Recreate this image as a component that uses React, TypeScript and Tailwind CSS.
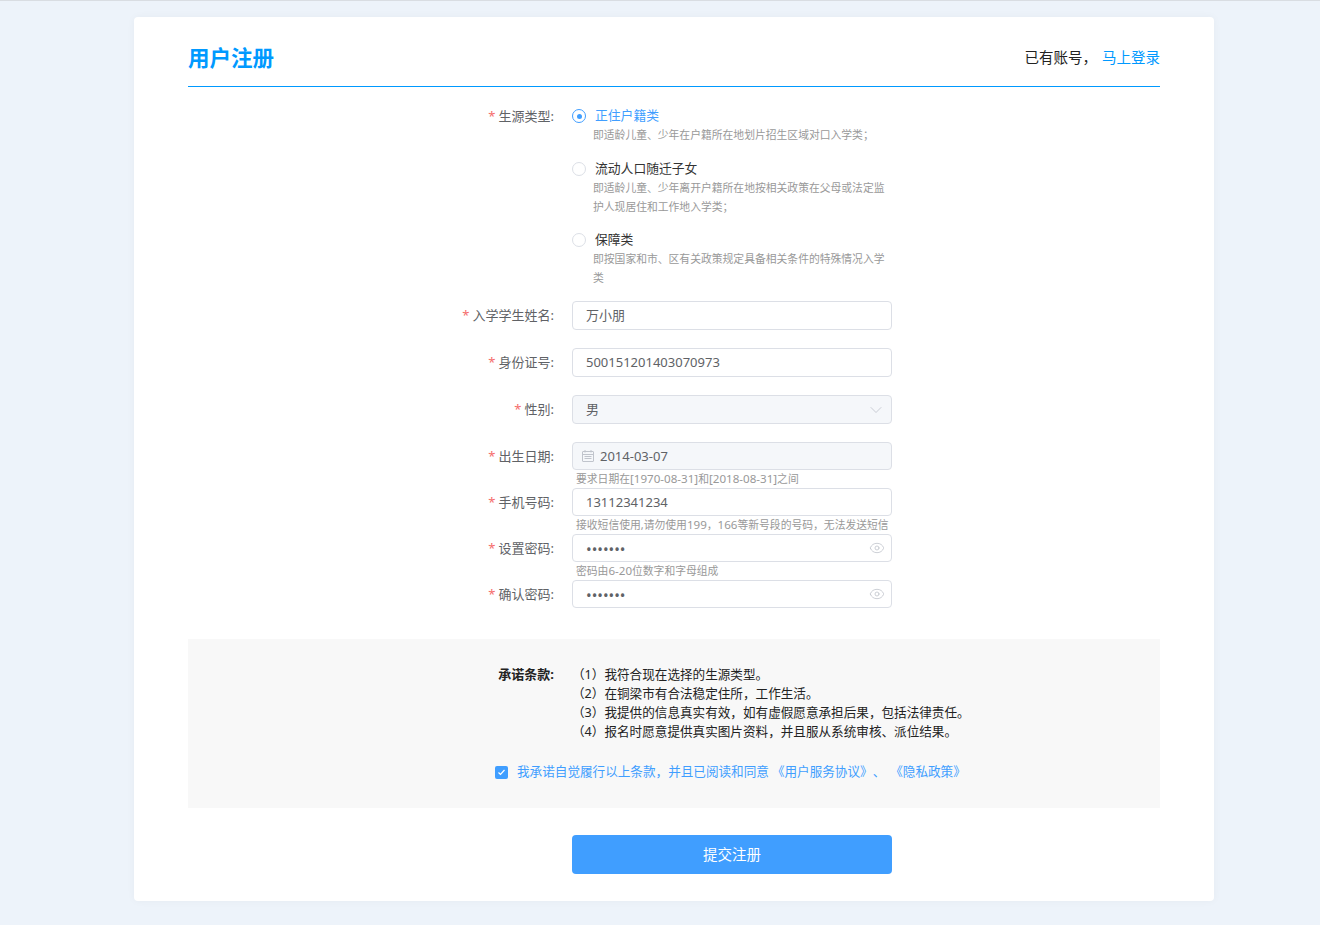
import React from 'react';
import { ChevronDown, Eye } from 'lucide-react';

const FONT = "font-['Noto_Sans','Noto_Sans_CJK_SC',sans-serif]";

const CalendarIcon = () => (
  <svg width="12" height="12" viewBox="0 0 12 12" fill="none" stroke="#c0c4cc" strokeWidth="1">
    <rect x="0.5" y="1.5" width="11" height="10" rx="0.5" />
    <path d="M0.5 4.5h11M3 0v2.5M9 0v2.5M2.5 6.5h7M2.5 8.5h7" />
  </svg>
);

const Radio = ({ checked, title, desc }: { checked?: boolean; title: string; desc: string }) => (
  <div>
    <div className="flex items-center h-[18px]">
      {checked ? (
        <span className="w-[14px] h-[14px] rounded-full border border-[#409eff] bg-white flex items-center justify-center">
          <span className="w-[5px] h-[5px] rounded-full bg-[#409eff]" />
        </span>
      ) : (
        <span className="w-[14px] h-[14px] rounded-full border border-[#dcdfe6] bg-white" />
      )}
      <span className={`ml-[9px] text-[12.8px] ${checked ? 'text-[#409eff]' : 'text-[#333]'}`}>{title}</span>
    </div>
    <p className="pl-[21px] text-[10.8px] leading-[19px] text-[#999]">{desc}</p>
  </div>
);

const Label = ({ text }: { text: string }) => (
  <label className="w-[384px] shrink-0 pr-[18px] text-right text-[13px] text-[#606266]">
    <span className="text-[#f56c6c] mr-[3px]">*</span>
    {text}:
  </label>
);

// latin part of a hint runs a little wider than the chinese around it
const Num = ({ children }: { children: React.ReactNode }) => <span className="text-[11.6px]">{children}</span>;

type FieldProps = {
  label: string;
  value: string;
  hint?: React.ReactNode;
  short?: boolean;
  type?: string;
  disabled?: boolean;
  left?: React.ReactNode;
  right?: React.ReactNode;
};

const Field = ({ label, value, hint, short, type = 'text', disabled, left, right }: FieldProps) => {
  const height = short ? 'h-[28px]' : 'h-[29px]';
  return (
    <div className="flex">
      <div className={`flex items-center ${height} ${short ? 'pt-[2px]' : ''}`}>
        <Label text={label} />
      </div>
      <div className="w-[320px]">
        <div
          className={`${height} flex items-center rounded border border-[#dcdfe6] ${disabled ? 'bg-[#f5f7fa]' : 'bg-white'} ${left ? 'pl-[9px]' : 'pl-[13px]'} pr-[8px]`}
        >
          {left}
          <input
            readOnly
            type={type}
            value={value}
            className={`flex-1 min-w-0 bg-transparent outline-none text-[#606266] ${type === 'password' ? 'text-[15px]' : 'text-[13px]'} ${short ? 'mt-[2px]' : ''} ${left ? 'ml-[6px]' : ''}`}
          />
          {right}
        </div>
        <div className="h-[18px] pl-1 text-[10.8px] leading-[18px] text-[#999] whitespace-nowrap">{hint}</div>
      </div>
    </div>
  );
};

const terms = [
  '我符合现在选择的生源类型。',
  '在铜梁市有合法稳定住所，工作生活。',
  '我提供的信息真实有效，如有虚假愿意承担后果，包括法律责任。',
  '报名时愿意提供真实图片资料，并且服从系统审核、派位结果。',
];

const App: React.FC = () => {
  return (
    <div className={`min-h-[925px] bg-[#edf3fa] border-t border-[#d9dde2] pt-4 ${FONT}`}>
      <div className="w-[1080px] ml-[134px] bg-white rounded shadow-[0_0_8px_rgba(0,0,0,0.04)] px-[54px] pb-[27px]">
        {/* Header */}
        <div className="h-[70px] flex items-center justify-between border-b border-[#0099ff] pt-[26px] pb-[13px]">
          <h1 className="text-[21.5px] font-bold text-[#0099ff]">用户注册</h1>
          <p className="text-[14.5px] text-[#222]">
            已有账号，<a href="#" className="ml-[5px] text-[#0099ff]">马上登录</a>
          </p>
        </div>

        {/* Source type */}
        <div className="flex mt-5">
          <div className="flex items-center h-[18px] pt-[2px]">
            <Label text="生源类型" />
          </div>
          <div className="w-[320px] flex flex-col gap-[15.5px]">
            <Radio checked title="正住户籍类" desc="即适龄儿童、少年在户籍所在地划片招生区域对口入学类；" />
            <Radio title="流动人口随迁子女" desc="即适龄儿童、少年离开户籍所在地按相关政策在父母或法定监护人现居住和工作地入学类；" />
            <Radio title="保障类" desc="即按国家和市、区有关政策规定具备相关条件的特殊情况入学类" />
          </div>
        </div>

        {/* Fields */}
        <div className="mt-[14px]">
          <Field label="入学学生姓名" value="万小朋" />
          <Field label="身份证号" value="500151201403070973" />
          <Field
            label="性别"
            value="男"
            disabled
            right={<ChevronDown size={20} strokeWidth={1} className="text-[#c0c4cc] -mr-[3px]" />}
          />
          <Field
            label="出生日期"
            value="2014-03-07"
            short
            disabled
            left={<CalendarIcon />}
            hint={<>要求日期在<Num>[1970-08-31]</Num>和<Num>[2018-08-31]</Num>之间</>}
          />
          <Field
            label="手机号码"
            value="13112341234"
            short
            hint={<>接收短信使用,请勿使用<Num>199</Num>，<Num>166</Num>等新号段的号码，无法发送短信</>}
          />
          <Field
            label="设置密码"
            value="1234567"
            type="password"
            short
            hint={<>密码由<Num>6-20</Num>位数字和字母组成</>}
            right={<Eye size={16} strokeWidth={1.2} className="text-[#c0c4cc] -mr-[2px]" />}
          />
          <Field
            label="确认密码"
            value="1234567"
            type="password"
            short
            right={<Eye size={16} strokeWidth={1.2} className="text-[#c0c4cc] -mr-[2px]" />}
          />
        </div>

        {/* Terms */}
        <div className="mt-[13px] bg-[#f8f8f8] h-[169px] pt-[26px]">
          <div className="flex text-[12.6px] leading-[19px] text-[#222]">
            <div className="w-[366px] text-right text-[13px] font-bold shrink-0">承诺条款:</div>
            <ol className="ml-[18px]">
              {terms.map((t, i) => (
                <li key={t}>（{i + 1}）{t}</li>
              ))}
            </ol>
          </div>
          <div className="flex items-center mt-[22px] ml-[307px] text-[12.6px] text-[#409eff] whitespace-nowrap">
            <span className="w-[13px] h-[13px] rounded-[2px] bg-[#409eff] flex items-center justify-center">
              <svg width="9" height="9" viewBox="0 0 9 9" fill="none" stroke="white" strokeWidth="1.2">
                <path d="M1.5 4.5l2 2 4-4.5" />
              </svg>
            </span>
            <span className="ml-[9px]">我承诺自觉履行以上条款，并且已阅读和同意</span>
            <a href="#" className="ml-[3px]">《用户服务协议》</a>
            <span>、</span>
            <a href="#" className="ml-[5px]">《隐私政策》</a>
          </div>
        </div>

        {/* Submit */}
        <div className="mt-[27px] pl-[384px]">
          <button className="w-[320px] h-[39px] rounded bg-[#409eff] text-white text-[14.5px]">提交注册</button>
        </div>
      </div>
    </div>
  );
};

export default App;
